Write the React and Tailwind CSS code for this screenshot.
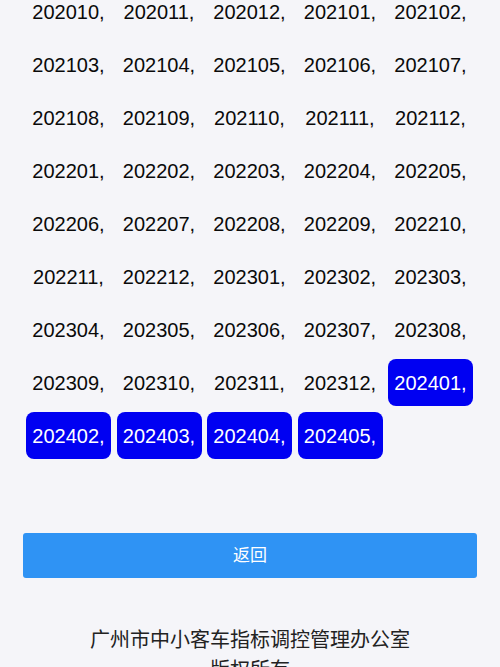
import React from "react";

const codes = [
  "202010", "202011", "202012", "202101", "202102",
  "202103", "202104", "202105", "202106", "202107",
  "202108", "202109", "202110", "202111", "202112",
  "202201", "202202", "202203", "202204", "202205",
  "202206", "202207", "202208", "202209", "202210",
  "202211", "202212", "202301", "202302", "202303",
  "202304", "202305", "202306", "202307", "202308",
  "202309", "202310", "202311", "202312", "202401",
  "202402", "202403", "202404", "202405",
];

// months already published this year get the blue highlight
const isActive = (c) => c.startsWith("2024");

export default function App() {
  return (
    <div
      className="min-h-screen bg-[#f5f5f9] overflow-hidden"
      style={{ fontFamily: '"Liberation Sans", "Noto Sans CJK SC", sans-serif' }}
    >
      <div className="mt-[-12px] pl-[26px] flex flex-wrap gap-x-[5.5px] gap-y-[6px] w-[480px]">
        {codes.map((c) => (
          <div
            key={c}
            className={
              "w-[85px] h-[47px] flex items-center justify-center rounded-[8px] text-[20px] " +
              (isActive(c) ? "bg-[#0000f2] text-white" : "text-[#0a0a0a]")
            }
          >
            {c},
          </div>
        ))}
      </div>

      <div className="px-[23px] mt-[74px]">
        <button className="w-full h-[45px] rounded-[3px] bg-[#2f93f4] text-white text-[17px] flex items-center justify-center">
          返回
        </button>
      </div>

      <div className="mt-[47px] text-center text-[20px] leading-[30px] text-[#222222]">
        <p>广州市中小客车指标调控管理办公室</p>
        <p>版权所有</p>
      </div>
    </div>
  );
}
